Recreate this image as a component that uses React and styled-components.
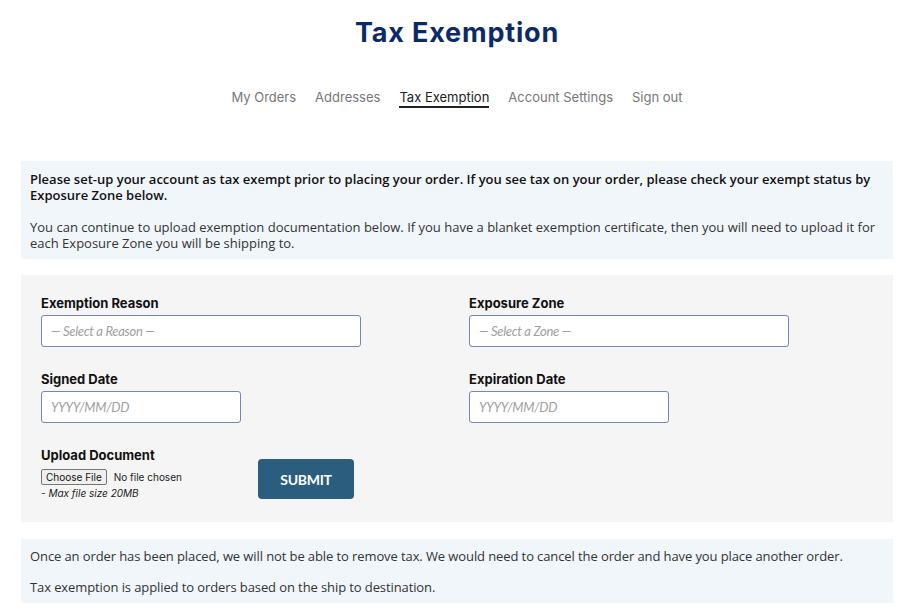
import React from 'react';
import styled, { createGlobalStyle } from 'styled-components';

const GlobalStyle = createGlobalStyle`
  body {
    margin: 0;
    background: #fff;
    font-family: "Open Sans", "Liberation Sans", sans-serif;
    color: #222;
  }
`;

const Page = styled.div`
  padding: 0 18px 10px 21px;
`;

const Title = styled.h1`
  margin: 0;
  padding-top: 16px;
  text-align: center;
  font-family: Inter, "Open Sans", sans-serif;
  font-weight: 700;
  font-size: 27px;
  letter-spacing: 0.8px;
  line-height: 34px;
  color: #0b2a6b;
`;

const Tabs = styled.nav`
  display: flex;
  justify-content: center;
  gap: 19px;
  margin-top: 38px;
  margin-bottom: 53px;
`;

const Tab = styled.a`
  font-family: Inter, "Open Sans", sans-serif;
  font-size: 13px;
  line-height: 18px;
  color: ${p => (p.$active ? '#222' : '#777')};
  text-decoration: none;
  border-bottom: 2px solid ${p => (p.$active ? '#222' : 'transparent')};
`;

const Notice = styled.div`
  background: #f1f6fa;
  padding: 10px 9px 8px;
  font-size: 13px;
  line-height: 16px;
  color: #333;

  p {
    margin: 0;
  }
  p + p {
    margin-top: 16px;
  }
  strong {
    color: #111;
    font-weight: 600;
  }
`;

const FormPanel = styled.form`
  margin-top: 16px;
  background: #f5f5f5;
  padding: 21px 20px 23px;
  display: grid;
  grid-template-columns: 428px 1fr;
  row-gap: 25px;
`;

const Field = styled.div`
  display: flex;
  flex-direction: column;
  width: ${p => (p.$w ? `${p.$w}px` : 'auto')};
`;

const Label = styled.label`
  font-family: Inter, "Open Sans", sans-serif;
  font-weight: 700;
  font-size: 13px;
  line-height: 14px;
  color: #111;
  margin-bottom: 5px;
`;

const Input = styled.input`
  box-sizing: border-box;
  width: ${p => p.$w}px;
  height: 32px;
  border: 1px solid #7388ad;
  border-radius: 3px;
  background: #fff;
  padding: 0 9px;
  font-family: Lato, sans-serif;
  font-style: italic;
  font-size: 13px;
  letter-spacing: -0.3px;
  color: #333;
  &::placeholder {
    color: #a0a0a0;
  }
`;

const UploadRow = styled.div`
  display: flex;
  align-items: flex-start;
`;

const FileInput = styled.input`
  font-family: Inter, "Open Sans", sans-serif;
  font-size: 10px;
  color: #222;
  margin: 2px 0 0;
  &::file-selector-button {
    font-family: Inter, "Open Sans", sans-serif;
    font-size: 10px;
    padding: 1px 4px;
    margin-right: 7px;
    border: 1px solid #767676;
    border-radius: 2px;
    background: #efefef;
    color: #111;
  }
`;

const Hint = styled.div`
  font-family: Inter, "Open Sans", sans-serif;
  font-style: italic;
  font-size: 10px;
  line-height: 12px;
  margin-top: 2px;
  color: #222;
`;

const Submit = styled.button`
  margin-top: 11px;
  width: 96px;
  height: 40px;
  border: none;
  border-radius: 4px;
  background: #2b5d7e;
  color: #fff;
  font-family: Lato, sans-serif;
  font-weight: 700;
  font-size: 14px;
  letter-spacing: -0.3px;
`;

const Footer = styled(Notice)`
  margin-top: 17px;
  padding: 9px 9px 8px;
  letter-spacing: -0.1px;
  p + p {
    margin-top: 15px;
  }
`;

export default function App() {
  return (
    <Page>
      <GlobalStyle />
      <Title>Tax Exemption</Title>
      <Tabs>
        <Tab href="#">My Orders</Tab>
        <Tab href="#">Addresses</Tab>
        <Tab href="#" $active>Tax Exemption</Tab>
        <Tab href="#">Account Settings</Tab>
        <Tab href="#">Sign out</Tab>
      </Tabs>
      <Notice>
        <p>
          <strong>
            Please set-up your account as tax exempt prior to placing your order. If you see tax on your order, please check your exempt status by Exposure Zone below.
          </strong>
        </p>
        <p>
          You can continue to upload exemption documentation below. If you have a blanket exemption certificate, then you will need to upload it for each Exposure Zone you will be shipping to.
        </p>
      </Notice>
      <FormPanel onSubmit={e => e.preventDefault()}>
        <Field>
          <Label>Exemption Reason</Label>
          <Input $w={320} placeholder="— Select a Reason —" />
        </Field>
        <Field>
          <Label>Exposure Zone</Label>
          <Input $w={320} placeholder="— Select a Zone —" />
        </Field>
        <Field>
          <Label>Signed Date</Label>
          <Input $w={200} placeholder="YYYY/MM/DD" />
        </Field>
        <Field>
          <Label>Expiration Date</Label>
          <Input $w={200} placeholder="YYYY/MM/DD" />
        </Field>
        <UploadRow>
          <Field $w={217}>
            <Label>Upload Document</Label>
            <FileInput type="file" />
            <Hint>- Max file size 20MB</Hint>
          </Field>
          <Submit type="submit">SUBMIT</Submit>
        </UploadRow>
      </FormPanel>
      <Footer>
        <p>Once an order has been placed, we will not be able to remove tax. We would need to cancel the order and have you place another order.</p>
        <p>Tax exemption is applied to orders based on the ship to destination.</p>
      </Footer>
    </Page>
  );
}
